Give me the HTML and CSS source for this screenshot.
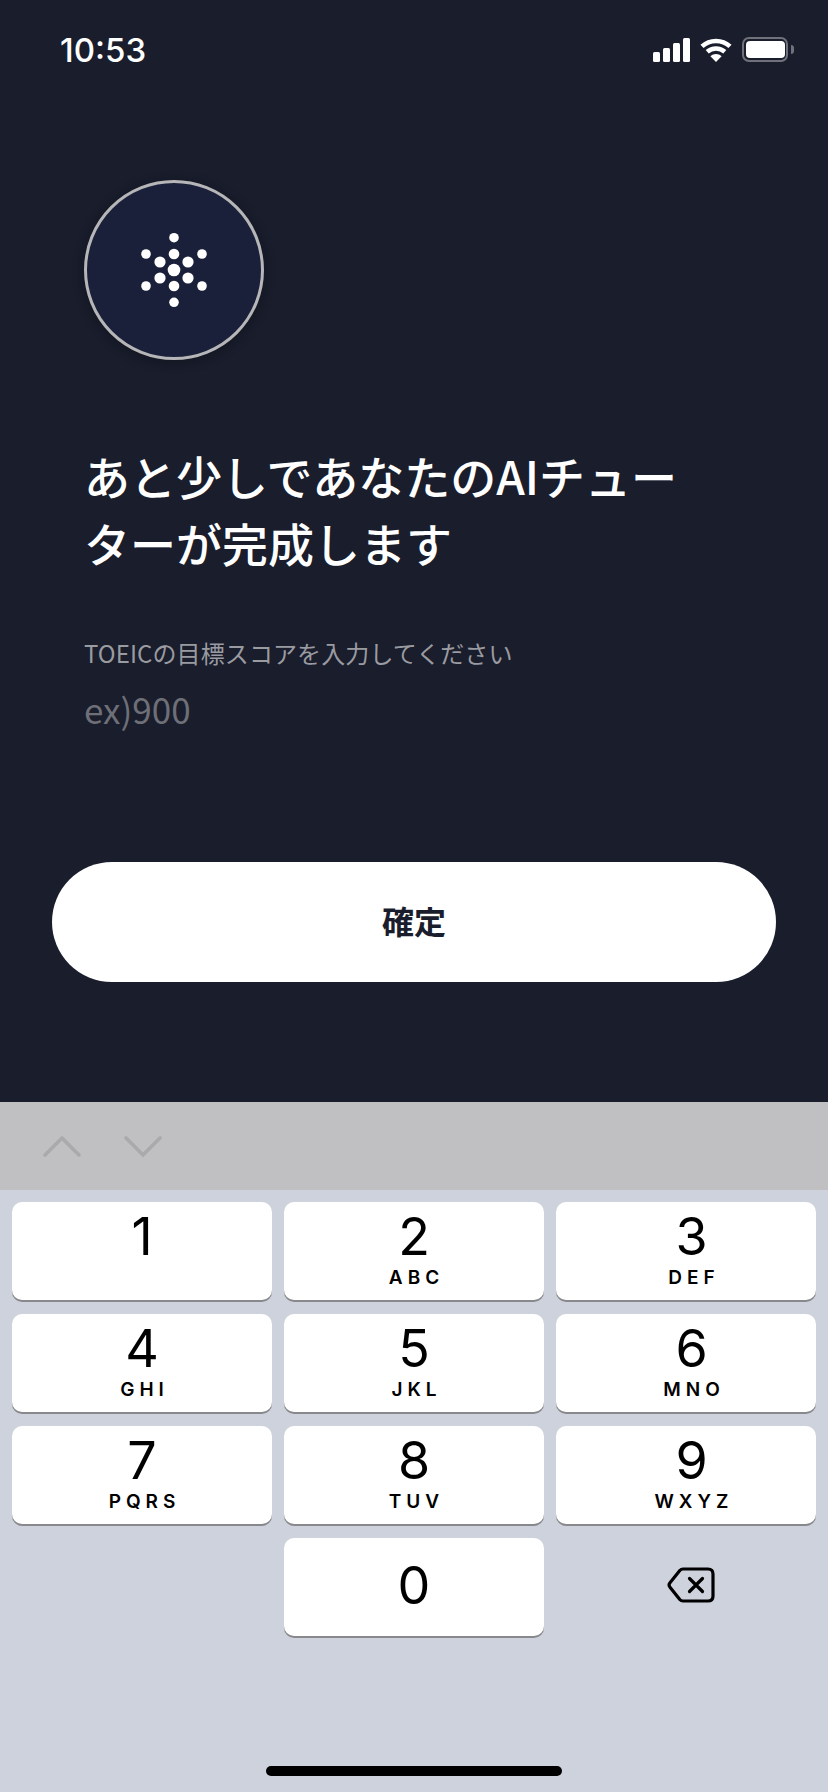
FILE: index.html
```html
<!DOCTYPE html>
<html lang="ja">

<head>
    <meta charset="UTF-8">
    <meta name="viewport" content="width=device-width, initial-scale=1.0">
    <title>TOEIC目標スコア</title>
    <link rel="stylesheet" href="styles.css">
</head>

<body>
    <div class="screen">
        <!-- Status bar -->
        <div class="status-bar">
            <span class="time">10:53</span>
            <div class="status-icons">
                <svg class="signal" width="37" height="24" viewBox="0 0 37 24">
                    <rect x="0" y="14" width="7" height="10" rx="1.5" />
                    <rect x="10" y="10" width="7" height="14" rx="1.5" />
                    <rect x="20" y="5" width="7" height="19" rx="1.5" />
                    <rect x="30" y="0" width="7" height="24" rx="1.5" />
                </svg>
                <svg class="wifi" width="32" height="24" viewBox="0 0 32 24">
                    <path d="M2 8.4C9.8 1.2 22.2 1.2 30 8.4" />
                    <path d="M7.2 13.8C12.2 9.4 19.8 9.4 24.8 13.8" />
                    <path class="wifi-tip" d="M16 24L10.4 18.2C13.6 15.4 18.4 15.4 21.6 18.2Z" />
                </svg>
                <div class="battery">
                    <div class="battery-body">
                        <div class="battery-level"></div>
                    </div>
                    <div class="battery-cap"></div>
                </div>
            </div>
        </div>

        <!-- Main content -->
        <div class="content">
            <div class="avatar">
                <svg width="80" height="80" viewBox="-40 -40 80 80">
                    <circle cx="0" cy="0" r="6.3" />
                    <circle cx="0" cy="-16" r="5.3" />
                    <circle cx="0" cy="16" r="5.3" />
                    <circle cx="-14" cy="-8" r="5.6" />
                    <circle cx="14" cy="-8" r="5.6" />
                    <circle cx="-14" cy="8" r="5.6" />
                    <circle cx="14" cy="8" r="5.6" />
                    <circle cx="0" cy="-32.3" r="4.8" />
                    <circle cx="0" cy="32.3" r="4.8" />
                    <circle cx="-28" cy="-16" r="4.8" />
                    <circle cx="28" cy="-16" r="4.8" />
                    <circle cx="-28" cy="16" r="4.8" />
                    <circle cx="28" cy="16" r="4.8" />
                </svg>
            </div>
            <h1 class="title">あと少しであなたのAIチューターが完成します</h1>
            <p class="label">TOEICの目標スコアを入力してください</p>
            <p class="placeholder">ex)900</p>
            <button class="submit">確定</button>
        </div>

        <!-- Keyboard -->
        <div class="keyboard">
            <div class="toolbar">
                <svg width="38" height="22" viewBox="0 0 38 22">
                    <path d="M2 20L19 3L36 20" />
                </svg>
                <svg class="toolbar-down" width="38" height="22" viewBox="0 0 38 22">
                    <path d="M2 2L19 19L36 2" />
                </svg>
            </div>
            <div class="keys">
                <div class="key"><span class="digit">1</span></div>
                <div class="key"><span class="digit">2</span><span class="letters">ABC</span></div>
                <div class="key key-right"><span class="digit">3</span><span class="letters">DEF</span></div>
                <div class="key"><span class="digit">4</span><span class="letters">GHI</span></div>
                <div class="key"><span class="digit">5</span><span class="letters">JKL</span></div>
                <div class="key key-right"><span class="digit">6</span><span class="letters">MNO</span></div>
                <div class="key"><span class="digit">7</span><span class="letters">PQRS</span></div>
                <div class="key"><span class="digit">8</span><span class="letters">TUV</span></div>
                <div class="key key-right"><span class="digit">9</span><span class="letters">WXYZ</span></div>
                <div class="key-empty"></div>
                <div class="key key-zero"><span class="digit">0</span></div>
                <div class="key-empty key-delete">
                    <svg width="48" height="36" viewBox="0 0 48 36">
                        <path class="delete-outline" d="M16 2H41C44.5 2 46 3.5 46 7V29C46 32.5 44.5 34 41 34H16C14.6 34 13.6 33.4 12.8 32.5L3 20.2C2 19 2 17 3 15.8L12.8 3.5C13.6 2.6 14.6 2 16 2Z" />
                        <path class="delete-x" d="M22.5 11.5L35.5 24.5M35.5 11.5L22.5 24.5" />
                    </svg>
                </div>
            </div>
            <div class="home-bar"></div>
        </div>
    </div>
</body>

</html>
```

FILE: styles.css
```css
* {
    box-sizing: border-box;
}

body {
    margin: 0;
    background-color: #191d2c;
    font-family: "Noto Sans CJK JP", "Noto Sans", sans-serif;
}

.screen {
    width: 828px;
    height: 1792px;
    display: flex;
    flex-direction: column;
    overflow: hidden;
}

/* Status bar */

.status-bar {
    height: 100px;
    padding: 30px 34px 0 60px;
    display: flex;
    justify-content: space-between;
    align-items: flex-start;
    color: #fff;
}

.time {
    font-family: Inter, sans-serif;
    font-size: 33px;
    line-height: 40px;
    font-weight: 500;
}

.status-icons {
    display: flex;
    align-items: center;
    gap: 10px;
    margin-top: 7px;
}

.signal {
    fill: #fff;
}

.wifi {
    fill: none;
    stroke: #fff;
    stroke-width: 4.6;
}

.wifi-tip {
    fill: #fff;
    stroke: none;
}

.battery {
    display: flex;
    align-items: center;
    gap: 3px;
}

.battery-body {
    width: 46px;
    height: 25px;
    padding: 2px 1.5px;
    border: 2px solid #70717a;
    border-radius: 7px;
}

.battery-level {
    width: 100%;
    height: 100%;
    background-color: #fff;
    border-radius: 4px;
}

.battery-cap {
    width: 3px;
    height: 9px;
    background-color: #70717a;
    border-radius: 0 3px 3px 0;
}

/* Main content */

.content {
    height: 1002px;
    padding: 80px 52px 0;
}

.avatar {
    width: 180px;
    height: 180px;
    margin-left: 32px;
    display: flex;
    justify-content: center;
    align-items: center;
    background-color: #1a2039;
    border: 3px solid #b6b6b8;
    border-radius: 50%;
    box-shadow: 0 2px 12px rgba(0, 0, 0, 0.3);
}

.avatar svg {
    fill: #fff;
}

.title {
    width: 620px;
    margin: 82px 0 0 32px;
    color: #fff;
    font-size: 46px;
    line-height: 67px;
    font-weight: 500;
}

.label {
    margin: 59px 0 0 32px;
    color: #9a9ba1;
    font-size: 24px;
    letter-spacing: 0.1px;
    line-height: 36px;
}

.placeholder {
    margin: 12px 0 0 32px;
    color: #6e6f77;
    font-size: 35px;
    line-height: 52px;
}

.submit {
    display: block;
    width: 724px;
    height: 120px;
    margin-top: 127px;
    padding-bottom: 5px;
    background-color: #fff;
    color: #191d2c;
    border: none;
    border-radius: 60px;
    font-family: inherit;
    font-size: 32px;
    font-weight: 700;
}

/* Keyboard */

.keyboard {
    flex: 1;
    display: flex;
    flex-direction: column;
    background-color: #ced2dc;
}

.toolbar {
    height: 88px;
    padding: 33px 0 0 43px;
    display: flex;
    align-items: flex-start;
    gap: 43px;
    background-color: #c0c0c3;
}

.toolbar svg {
    fill: none;
    stroke: #aaaaad;
    stroke-width: 3.6;
    stroke-linecap: round;
}

.toolbar .toolbar-down {
    margin-top: 1px;
}

.keys {
    padding: 12px 12px 0;
    display: grid;
    grid-template-columns: repeat(3, 260px);
    grid-auto-rows: 98px;
    gap: 14px 12px;
}

.key {
    display: flex;
    flex-direction: column;
    align-items: center;
    background-color: #fff;
    border-radius: 10px;
    box-shadow: 0 2px 0 #88898d;
    color: #000;
    font-family: Inter, sans-serif;
}

.key-right {
    padding-left: 11px;
}

.digit {
    font-size: 52px;
    line-height: 60px;
    font-weight: 400;
    margin-top: 5px;
}

.letters {
    font-size: 19px;
    line-height: 22px;
    font-weight: 600;
    letter-spacing: 5px;
    margin-right: -5px;
}

.key-zero {
    justify-content: center;
}

.key-zero .digit {
    margin-top: -3px;
}

.key-delete {
    display: flex;
    justify-content: center;
    align-items: center;
    padding: 0 0 4px 10px;
}

.delete-outline,
.delete-x {
    fill: none;
    stroke: #000;
    stroke-width: 3.2;
    stroke-linejoin: round;
    stroke-linecap: round;
}

.home-bar {
    width: 296px;
    height: 10px;
    margin: 130px auto 0;
    background-color: #000;
    border-radius: 5px;
}
```
